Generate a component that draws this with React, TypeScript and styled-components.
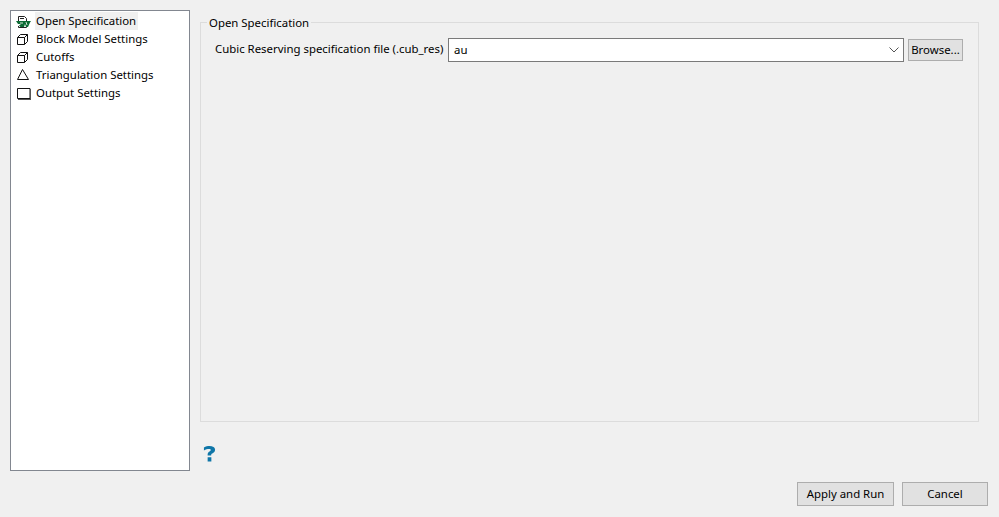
import React from "react";
import styled, { createGlobalStyle } from "styled-components";

const Global = createGlobalStyle`
  html, body { margin: 0; padding: 0; background: #f0f0f0; }
  * { box-sizing: border-box; }
  #root { width: 999px; height: 517px; overflow: hidden; }
`;

const Dialog = styled.div`
  width: 999px; height: 517px; background: #f0f0f0;
  padding: 10px 11px 11px 10px;
  display: flex; flex-direction: column;
  font: 11.4px/16px "Noto Sans", "Open Sans", sans-serif; color: #000;
`;
const Main = styled.div`display: flex; gap: 10px; height: 461px;`;
const NavList = styled.ul`
  width: 180px; height: 461px; margin: 0; padding: 1px 0 0 5px; list-style: none;
  background: #fff; border: 1px solid #828790;
`;
const NavRow = styled.li`display: flex; align-items: center; height: 18px;`;
const NavIcon = styled.svg`width: 16px; height: 16px; flex: none; margin-right: 3px;`;
const NavLabel = styled.span<{ $selected?: boolean }>`
  padding: 0 2px 0 1px; line-height: 18px;
  background: ${p => (p.$selected ? "#f0f0f0" : "transparent")};
`;
const Right = styled.div`flex: 1; padding-top: 12px; display: flex; flex-direction: column; margin-right: -2px;`;
const Group = styled.div`
  position: relative; flex: none; height: 400px; width: 779px; border: 1px solid #dcdcdc; padding: 15px 15px 0 14px;
`;
const Legend = styled.span`
  position: absolute; left: 6px; top: -8px; padding: 0 2px; line-height: 16px;
  background: #f0f0f0;
`;
const FieldRow = styled.div`display: flex; align-items: center; height: 24px;`;
const FieldLabel = styled.label`width: 233px; flex: none; white-space: nowrap; margin-top: -2px;`;
const Combo = styled.div`
  width: 456px; height: 24px; flex: none; background: #fff; border: 1px solid #7a7a7a;
  display: flex; align-items: center; justify-content: space-between; padding: 0 4px 0 5px;
`;
const Browse = styled.button`
  width: 55px; height: 22px; margin-left: 4px; padding: 0; background: #e1e1e1;
  border: 1px solid #adadad; font: inherit; color: #000;
`;
const HelpRow = styled.div`padding: 24px 0 0 3px;`;
const Help = styled.svg`display: block; width: 13px; height: 16px;`;
const Footer = styled.div`display: flex; justify-content: flex-end; gap: 8px; margin-top: 11px;`;
const ActionButton = styled.button<{ $w: number }>`
  width: ${p => p.$w}px; height: 24px; padding: 0; background: #e1e1e1;
  border: 1px solid #adadad; font: inherit; color: #000;
`;

const Box = () => (
  <NavIcon viewBox="0 0 16 16" fill="none" stroke="#111" strokeWidth="1">
    <path d="M1.500 6.500h7v7h-7zM1.500 6.500l3-3h7v7l-3 3M8.500 6.500l3-3" />
  </NavIcon>
);

export default function App() {
  return (
    <Dialog>
      <Global />
      <Main>
        <NavList>
          <NavRow>
            <NavIcon viewBox="0 0 16 16" fill="none">
              <path d="M2.500 8V3.500h6l2 2V8M4 5.500h4M2.500 13v1.500h8V13" stroke="#222" />
              <path d="M0 8h15l-1 1.500-2 4.500h-2L9 11l-1 3H4.500L3 12.500 5 11H2z" fill="#0b6b34" />
              <path d="M4 10h3M10 9l1 3" stroke="#d8e8d8" />
            </NavIcon>
            <NavLabel $selected>Open Specification</NavLabel>
          </NavRow>
          <NavRow><Box /><NavLabel>Block Model Settings</NavLabel></NavRow>
          <NavRow><Box /><NavLabel>Cutoffs</NavLabel></NavRow>
          <NavRow>
            <NavIcon viewBox="0 0 16 16" fill="none" stroke="#111">
              <path d="M6.500 2.500 1.500 12.500h11z" />
            </NavIcon>
            <NavLabel>Triangulation Settings</NavLabel>
          </NavRow>
          <NavRow>
            <NavIcon viewBox="0 0 16 16" fill="none" stroke="#111">
              <path d="M1.500 3.500h12.500v10h-12.500z" />
              <path d="M2 14.500h13M14.500 4v10.500" stroke="#555" />
            </NavIcon>
            <NavLabel>Output Settings</NavLabel>
          </NavRow>
        </NavList>
        <Right>
          <Group>
            <Legend>Open Specification</Legend>
            <FieldRow>
              <FieldLabel>Cubic Reserving specification file (.cub_res)</FieldLabel>
              <Combo>
                <span>au</span>
                <svg width="10" height="6" viewBox="0 0 10 6" fill="none" stroke="#555">
                  <path d="M.5.500 5 5 9.500.500" />
                </svg>
              </Combo>
              <Browse>Browse...</Browse>
            </FieldRow>
          </Group>
          <HelpRow>
            <Help viewBox="0 0 14 17" fill="#0f76a8">
              <path d="M1 1.500C3 .3 5 0 7 0c3.600 0 6 1.400 6 4 0 2-1.200 3-3 3.900-1 .5-1.200 1-1.200 2.100H5V9c0-1.700.8-2.600 2-3.300.9-.5 1.400-.9 1.400-1.500 0-.7-.7-1.100-1.900-1.100-1.800 0-3.500.5-5.500 1.500zM5 12h4v4.500H5z" />
            </Help>
          </HelpRow>
        </Right>
      </Main>
      <Footer>
        <ActionButton $w={97}>Apply and Run</ActionButton>
        <ActionButton $w={86}>Cancel</ActionButton>
      </Footer>
    </Dialog>
  );
}
